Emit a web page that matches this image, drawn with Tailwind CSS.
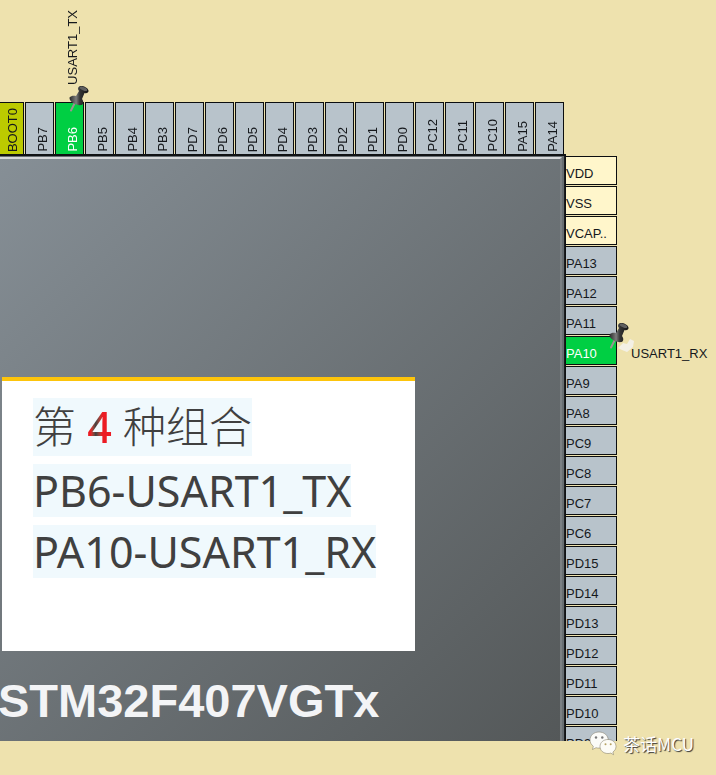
<!DOCTYPE html>
<html lang="zh-CN">
<head>
  <meta charset="UTF-8" />
  <meta name="viewport" content="width=device-width, initial-scale=1.0" />
  <title>STM32F407VGTx Pinout</title>
  <script src="https://cdn.jsdelivr.net/npm/@tailwindcss/browser@4"></script>
</head>
<body class="relative flex h-screen flex-col overflow-hidden bg-[#eee2ae] pb-[34px] font-['Liberation_Sans',Arial,sans-serif] text-[13px] leading-4 text-[#15181c]">
  <svg class="absolute size-0">
    <defs>
      <linearGradient id="metal" x1="0" y1="0" x2="1" y2="0">
        <stop offset="0" stop-color="#2a2a2a" />
        <stop offset=".35" stop-color="#7c7c7c" />
        <stop offset=".55" stop-color="#333" />
        <stop offset="1" stop-color="#151515" />
      </linearGradient>
      <symbol id="pushpin" viewBox="0 0 22 28">
        <path d="M6.500 18.500 3 25.500" stroke="#9a9391" stroke-width="2" stroke-linecap="round" />
        <path d="M1.500 12.500C3 10.500 6 10.500 8 11L11 6C9.500 4.500 9.500 2 11.500 1.200C14.500 0 20 2.500 20.500 5.500C20.800 8 18.500 8.500 16.500 8L14 14C16 16.500 15.500 19.500 13.500 20C9 21 1 17 1.500 12.500Z" fill="url(#metal)" />
        <ellipse cx="15.500" cy="3.800" rx="4" ry="1.600" transform="rotate(24 15.500 3.800)" fill="#606060" />
      </symbol>
    </defs>
  </svg>

  <!-- top side of the package -->
  <ul id="topPins" class="flex shrink-0 gap-px pt-[102px]"></ul>

  <div class="flex min-h-0 flex-1 overflow-hidden">
    <main class="min-w-0 flex-1 border-t-2 border-r border-[#101214] bg-[#686e72]">
      <div class="flex h-full flex-col border-r border-[#1b1d1f] pt-px pr-[2px]">
        <div class="flex-1 border-t-2 border-r-2 border-t-[#d6d8da] border-r-[#7b8083] bg-linear-135 from-[#868f96] to-[#545859] pt-[218px]">
          <section class="ml-[2px] h-[274px] w-[413px] border-t-4 border-[#fdc40b] bg-white px-[31px] pt-[17px] font-['Noto_Sans','Noto_Sans_CJK_SC',sans-serif] text-[43px] text-[#404040]">
            <p class="mb-2 w-fit bg-[#f0f9fd] leading-[58px] font-light">第 <span class="bg-linear-to-r from-[#ec1c24] from-15% via-[#404040] via-35% to-[#ec1c24] to-60% bg-clip-text font-medium text-transparent">4</span> 种组合</p>
            <p class="mb-2 w-fit bg-[#f0f9fd] leading-[53px]">PB6-USART1_TX</p>
            <p class="w-fit bg-[#f0f9fd] leading-[53px]">PA10-USART1_RX</p>
          </section>
          <h1 class="-ml-[2px] pt-6 text-[47px] leading-[52px] font-bold text-[#f3f4f6]">STM32F407VGTx</h1>
        </div>
      </div>
    </main>
    <!-- right side of the package -->
    <ul id="rightPins" class="flex w-[150px] shrink-0 flex-col gap-px pt-[2px]"></ul>
  </div>

  <div class="absolute right-[22px] bottom-[19px] flex items-center gap-[6px]">
    <svg class="h-[25px] w-[28px]" viewBox="0 0 28 25" stroke="#77715c" stroke-width=".5">
      <path d="M10 1C4.800 1 1 4.500 1 9c0 2.600 1.300 4.700 3.300 6.200L3.500 18.500 7 16.700c1 .3 2 .4 3 .4 5.200 0 9.200-3.600 9.200-8.100S15.200 1 10 1Z" fill="#fbfbf8" />
      <path d="M19 8.500c-4.600 0-8 3-8 7s3.400 7 8 7c1 0 1.900-.1 2.700-.4l2.900 1.600-.7-2.700c1.900-1.300 3.100-3.200 3.100-5.500 0-4-3.400-7-8-7Z" fill="#fdfcf6" />
      <g stroke="none">
        <circle cx="7" cy="6.500" r="1.200" fill="#777" /><circle cx="13.300" cy="6.500" r="1.200" fill="#777" />
        <circle cx="16.500" cy="13.200" r="1" fill="#b5a263" /><circle cx="21.700" cy="13.200" r="1" fill="#b5a263" />
      </g>
    </svg>
    <span class="font-['Noto_Sans_CJK_SC',sans-serif] text-[17px] leading-6 text-white [text-shadow:1px_1px_1px_#333]">茶话MCU</span>
  </div>

  <script>
    const topPins = ["BOOT0", "PB7", "PB6", "PB5", "PB4", "PB3", "PD7", "PD6", "PD5", "PD4", "PD3", "PD2", "PD1", "PD0", "PC12", "PC11", "PC10", "PA15", "PA14"];
    const rightPins = ["VDD", "VSS", "VCAP..", "PA13", "PA12", "PA11", "PA10", "PA9", "PA8", "PC9", "PC8", "PC7", "PC6", "PD15", "PD14", "PD13", "PD12", "PD11", "PD10", "PD9"];
    const signals = { PB6: "USART1_TX", PA10: "USART1_RX" };

    function pinColor(name) {
      if (signals[name]) return "bg-[#00cf43] text-white";
      if (name === "BOOT0") return "bg-[#bcca00]";
      if (name.startsWith("V")) return "bg-[#fff6cb]";
      return "bg-[#b8c3cb]";
    }

    document.getElementById("topPins").innerHTML = topPins.map((name, i) => `
      <li class="relative ${i === 0 ? "w-6 border-l-0" : "w-[29px]"} flex h-[52px] shrink-0 items-end justify-end border border-b-0 border-[#0c0e10] pr-[2px] pb-[2px] ${pinColor(name)}">
        <span class="rotate-180 [writing-mode:vertical-rl]">${name}</span>
        ${signals[name] ? `
          <span class="absolute right-[2px] bottom-[69px] rotate-180 text-[#15181c] [writing-mode:vertical-rl]">${signals[name]}</span>
          <svg class="absolute -top-[18px] left-3 z-10 h-7 w-[22px]"><use href="#pushpin" /></svg>` : ""}
      </li>`).join("");

    document.getElementById("rightPins").innerHTML = rightPins.map((name) => `
      <li class="relative flex h-[29px] shrink-0 items-end">
        <span class="flex h-full w-[51px] items-end border border-l-0 border-[#0c0e10] pb-[2px] ${pinColor(name)}">${name}</span>
        ${signals[name] ? `
          <svg class="absolute top-[2px] left-[52px] h-4 w-4" viewBox="0 0 16 16"><path d="M0 10 5 5 9 6 12 1 16 3 15 9 9 14 4 12Z" fill="#f4f4f2" opacity=".8" /></svg>
          <svg class="absolute -top-[14px] left-[42px] z-10 h-7 w-[22px]"><use href="#pushpin" /></svg>
          <span class="pb-[3px] pl-[14px]">${signals[name]}</span>` : ""}
      </li>`).join("");
  </script>
</body>
</html>
